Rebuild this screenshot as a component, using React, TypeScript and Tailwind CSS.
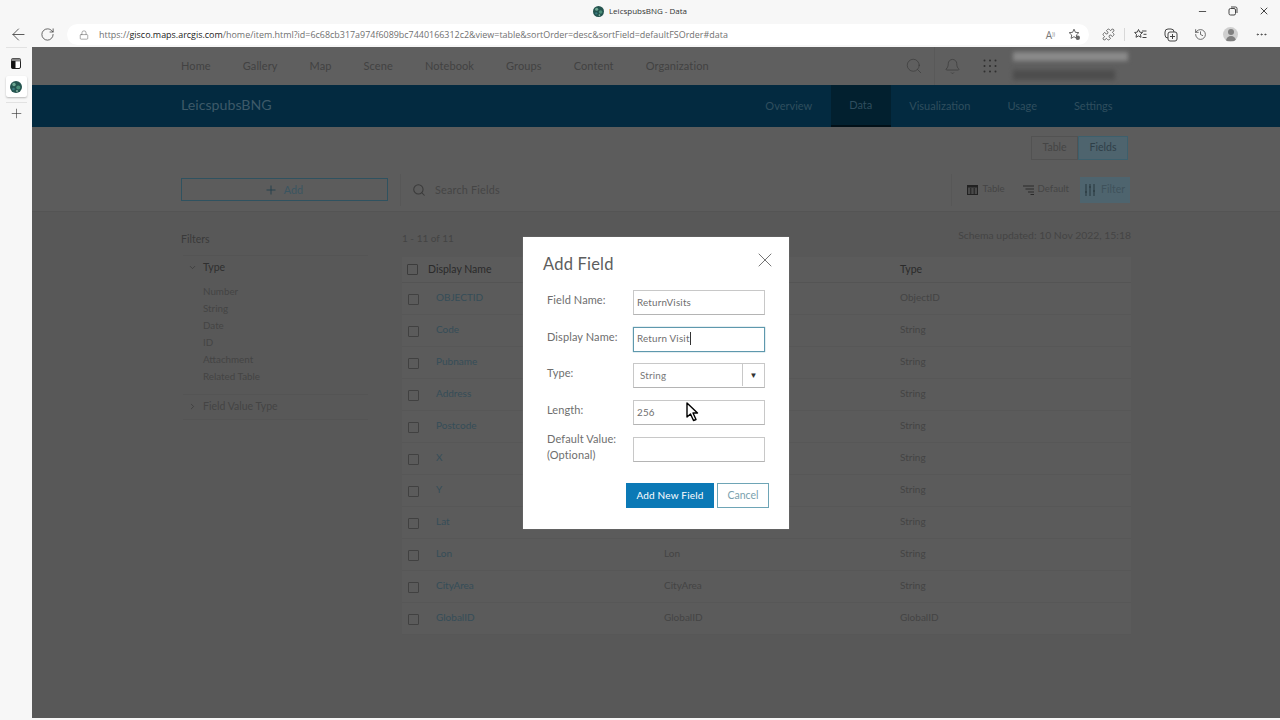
import React from "react";
import { ArrowLeft, RotateCw, Lock, X, Minus, Search, Bell, Plus, ChevronDown, ChevronRight, MoreHorizontal, History, Puzzle } from "lucide-react";

const nav = ["Home", "Gallery", "Map", "Scene", "Notebook", "Groups", "Content", "Organization"];
const tabs = ["Overview", "Data", "Visualization", "Usage", "Settings"];
const rows = [
  ["OBJECTID", "", "ObjectID"],
  ["Code", "", "String"],
  ["Pubname", "", "String"],
  ["Address", "", "String"],
  ["Postcode", "", "String"],
  ["X", "", "String"],
  ["Y", "", "String"],
  ["Lat", "", "String"],
  ["Lon", "Lon", "String"],
  ["CityArea", "CityArea", "String"],
  ["GlobalID", "GlobalID", "GlobalID"],
];

function Globe({ size = 12 }: { size?: number }) {
  return (
    <svg width={size} height={size} viewBox="0 0 12 12">
      <circle cx="6" cy="6" r="6" fill="#24544f" />
      <circle cx="4" cy="3.5" r="1.7" fill="#6fa893" />
      <circle cx="8.3" cy="6.5" r="2" fill="#4c8f79" />
      <circle cx="3.5" cy="8" r="1.3" fill="#3a7a80" />
      <circle cx="7" cy="10" r="0.9" fill="#8fb8a4" />
    </svg>
  );
}

function Field({ label, children, h = "h-[36.5px]" }: { label: React.ReactNode; children: React.ReactNode; h?: string }) {
  return (
    <div className={`flex items-start ${h}`}>
      <div className="w-[86px] pt-[2px] text-[11px] leading-[16px] text-[#6e6e6e] tracking-[0.1px]">{label}</div>
      {children}
    </div>
  );
}

const inputBase = "w-[132px] h-[25px] border border-[#c8c8c8] border-b-[#b4b4b4] text-[9.8px] text-[#6e6e6e] tracking-[0.2px]";

export default function App() {
  return (
    <div className="h-[720px] w-[1280px] overflow-hidden bg-[#f7f7f7] flex flex-col font-['Lato','Noto_Sans',sans-serif]">
      {/* title bar */}
      <div className="h-[22px] flex items-center relative shrink-0">
        <div className="flex-1 flex items-center justify-center gap-[5px] text-[8px] text-[#333] font-['Open_Sans',sans-serif]">
          <Globe size={11} />
          <span>LeicspubsBNG - Data</span>
        </div>
        <div className="absolute right-[10px] top-[5px] flex items-center gap-[20px] text-[#444]">
          <Minus size={11} />
          <svg width="10" height="10" viewBox="0 0 10 10" fill="none" stroke="currentColor" strokeWidth="1">
            <rect x="1" y="2.5" width="6.5" height="6.5" rx="1.5" />
            <path d="M3 1 H7.5 A1.5 1.5 0 0 1 9 2.5 V7" />
          </svg>
          <X size={12} />
        </div>
      </div>
      {/* address bar */}
      <div className="h-[25px] flex items-center shrink-0 text-[#444]">
        <div className="w-[67px] flex items-center pl-[9px] gap-[12px]">
          <ArrowLeft size={19} strokeWidth={1.1} />
          <RotateCw size={15} strokeWidth={1.3} />
        </div>
        <div className="w-[1022px] h-[21px] rounded-full bg-white flex items-center pl-[12px] pr-[8px] text-[8.95px] text-[#707070] font-['Open_Sans',sans-serif]">
          <Lock size={10} className="mr-[10px]" strokeWidth={1.4} />
          <span>https://<span className="text-[#222]">gisco.maps.arcgis.com</span>/home/item.html?id=6c68cb317a974f6089bc7440166312c2&view=table&sortOrder=desc&sortField=defaultFSOrder#data</span>
          <span className="ml-auto text-[10px] text-[#777] mr-[13px] leading-none">A<sup className="text-[5px]">))</sup></span>
          <svg width="13" height="13" viewBox="0 0 13 13" fill="none" stroke="#555" strokeWidth="0.9">
            <path d="M6 1.2 L7.4 4.3 L10.8 4.7 L8.3 7 L8.9 10.4 L6 8.7 L3.1 10.4 L3.7 7 L1.2 4.7 L4.6 4.3 Z" />
            <circle cx="9.8" cy="9.8" r="2.2" fill="#666" stroke="none" />
          </svg>
        </div>
        <div className="flex items-center text-[#444]">
          <Puzzle size={13} strokeWidth={1.4} className="ml-[13px]" />
          <div className="w-px h-[13px] bg-[#d8d8d8] ml-[9px]" />
          <svg width="13" height="13" viewBox="0 0 13 13" fill="none" stroke="currentColor" strokeWidth="1" className="ml-[9px]">
            <path d="M4.5 1.5 L5.7 4.1 L8.6 4.5 L6.5 6.4 L7 9.3 L4.5 7.9 L2 9.3 L2.5 6.4 L0.6 4.5 L3.3 4.1 Z" />
            <path d="M8 3 H12.5 M9.5 6.3 H12.5 M8.5 9.5 H12.5" />
          </svg>
          <svg width="14" height="14" viewBox="0 0 14 14" fill="none" stroke="currentColor" strokeWidth="1" className="ml-[17px]">
            <rect x="1" y="1" width="9" height="9" rx="3" />
            <rect x="4" y="4" width="9" height="9" rx="2" fill="#f7f7f7" />
            <path d="M8.5 6 V11 M6 8.5 H11" />
          </svg>
          <History size={13} strokeWidth={1.4} className="ml-[16px]" />
          <div className="ml-[16px] w-[15px] h-[15px] rounded-full bg-[#cfcfcf] flex flex-col items-center justify-center gap-[1px] overflow-hidden">
            <div className="w-[6px] h-[6px] rounded-full bg-[#808080]" />
            <div className="w-[10px] h-[5px] rounded-t-full bg-[#808080]" />
          </div>
          <MoreHorizontal size={13} strokeWidth={1.6} className="ml-[17px]" />
        </div>
      </div>
      <div className="flex flex-1 min-h-0">
        {/* sidebar */}
        <div className="w-[32px] shrink-0 flex flex-col items-center text-[#333]">
          <div className="w-[21px] h-px bg-[#e2e2e2]" />
          <svg width="10" height="11" viewBox="0 0 10 11" className="mt-[10px]">
            <rect x="0.5" y="0.5" width="9" height="10" rx="1.5" fill="#fff" stroke="#222" />
            <rect x="0.5" y="0.5" width="9" height="3" fill="#888" />
            <rect x="0.5" y="3" width="4" height="7.5" fill="#111" />
          </svg>
          <div className="mt-[7px] w-[21px] h-[21px] rounded-[2px] bg-white shadow-[0_1px_2px_rgba(0,0,0,0.25)] flex items-center justify-center"><Globe size={12} /></div>
          <div className="mt-[5px] w-[21px] h-px bg-[#e2e2e2]" />
          <Plus size={15} strokeWidth={1} className="mt-[3px]" />
        </div>
        {/* main */}
        <div className="flex-1 h-[671px] relative bg-[#585858] text-[#454545] flex flex-col overflow-hidden">
          <div className="h-[38px] shrink-0 bg-[#5f5f5f] flex items-center pl-[149px] pr-[152px] text-[11px] text-[#424242]">
            <div className="flex gap-[32px] tracking-[0.1px]">
              {nav.map((n) => <span key={n}>{n}</span>)}
            </div>
            <div className="ml-auto flex items-center text-[#3a3a3a]">
              <Search size={18} strokeWidth={0.9} />
              <div className="w-px h-[38px] bg-[#595959] ml-[11px]" />
              <Bell size={17} strokeWidth={1} className="ml-[9px]" />
              <svg width="14" height="14" viewBox="0 0 14 14" className="ml-[22px] mr-[16px]" fill="#2f2f2f">
                {[1.5, 7, 12.5].flatMap((y) => [1.5, 7, 12.5].map((x) => <circle key={`${x}-${y}`} cx={x} cy={y} r="1" />))}
              </svg>
              <div className="w-[115px] flex flex-col gap-[9px] -mt-[1px]">
                <div className="h-[9px] w-[115px] bg-[#8a8a8a] blur-[2px]" />
                <div className="h-[10px] w-[102px] bg-[#4d4d4d] blur-[2px]" />
              </div>
            </div>
          </div>
          <div className="h-[42px] shrink-0 bg-[#032a40] flex items-center justify-between pl-[149px] pr-[149px]">
            <span className="text-[14.2px] text-[#3d5968] -mt-[2px]">LeicspubsBNG</span>
            <div className="flex h-full text-[11px] text-[#2f4e5e]">
              {tabs.map((t) => (
                <div key={t} className={t === "Data" ? "px-[18.5px] flex items-center bg-[#02202f] border-b-2 border-[#011018]" : "px-[18.5px] flex items-center"}>{t}</div>
              ))}
            </div>
          </div>
          <div className="h-[41px] shrink-0 flex justify-end items-start pt-[9px] pr-[152px] text-[10.5px] bg-[#5c5c5c]">
            <div className="w-[47px] h-[24px] border border-[#525252] flex items-center justify-center text-[#454545]">Table</div>
            <div className="w-[50px] h-[24px] border border-[#3d5f6c] bg-[#4e646e] flex items-center justify-center text-[#2e3f48]">Fields</div>
          </div>
          <div className="h-[44px] shrink-0 border-b border-[#545454] bg-[#5c5c5c] flex items-center pl-[149px] pr-[150px] text-[10.8px]">
            <div className="w-[207px] h-[23px] pr-[2px] pt-[1px] border border-[#2f5260] flex items-center justify-center gap-[6px] text-[#3a5561]">
              <Plus size={14} strokeWidth={1.6} className="text-[#223f4b]" />Add
            </div>
            <div className="w-px h-[32px] bg-[#575757] ml-[12px]" />
            <Search size={14} strokeWidth={1.8} className="ml-[11px] text-[#3a3a3a]" />
            <span className="ml-[9px] pt-[1px] text-[#454545] tracking-[0.2px]">Search Fields</span>
            <div className="ml-auto flex items-center h-[26px] text-[#454545] text-[9.6px]">
              <div className="w-px h-[32px] bg-[#575757] mr-[15px]" />
              <svg width="11" height="10" viewBox="0 0 11 10" fill="none">
                <rect x="0.5" y="0.5" width="10" height="9" fill="#4a4a4a" stroke="#222" />
                <rect x="0" y="0" width="11" height="2.5" fill="#222" />
                <path d="M3.8 3 V9 M7.2 3 V9" stroke="#222" />
              </svg>
              <span className="ml-[5px] w-[22px]">Table</span>
              <svg width="11" height="10" viewBox="0 0 11 10" stroke="#2a2a2a" className="ml-[18px]">
                <path d="M0 1 H11 M2.5 4 H11 M5 7 H11 M7.5 9.5 H11" />
              </svg>
              <span className="ml-[4px]">Default</span>
              <div className="ml-[11px] w-[50px] h-[26px] bg-[#4e646e] flex items-center justify-center gap-[6px] text-[#3f525b] text-[10.5px]">
                <svg width="10" height="12" viewBox="0 0 10 12" stroke="#26363d">
                  <path d="M1 0 V12 M5 0 V12 M9 0 V12 M0 8 H2 M4 3 H6 M8 7 H10" />
                </svg>
                Filter
              </div>
            </div>
          </div>
          <div className="flex flex-1 pl-[149px] pr-[149px]">
            {/* filters */}
            <div className="w-[207px] shrink-0 pt-[20px] text-[10.5px]">
              <div className="leading-[14px] text-[#3a3a3a]">Filters</div>
              <div className="ml-[2px] w-[185px]">
                <div className="mt-[9px] border-t border-[#545454] pl-[5px] flex items-center text-[#2f2f2f] h-[24px]">
                  <ChevronDown size={9} className="text-[#3a3a3a]" />
                  <span className="ml-[6px]">Type</span>
                </div>
                <div className="pl-[20px] pt-[4px] pb-[8px] border-b border-[#545454] leading-[17.1px] text-[9.8px] text-[#444]">
                  {["Number", "String", "Date", "ID", "Attachment", "Related Table"].map((f) => <div key={f}>{f}</div>)}
                </div>
                <div className="h-[25px] border-b border-[#545454] pl-[5px] flex items-center text-[#444]">
                  <ChevronRight size={9} className="text-[#3a3a3a]" />
                  <span className="ml-[6px]">Field Value Type</span>
                </div>
              </div>
            </div>
            {/* table */}
            <div className="flex-1 ml-[14px] text-[10px]">
              <div className="flex justify-between h-[45px] pt-[19px] text-[#444] leading-[14px]">
                <span>1 - 11 of 11</span>
                <span className="-mt-[3px] text-[10.4px]">Schema updated: 10 Nov 2022, 15:18</span>
              </div>
              <div className="h-[26px] pt-[1px] border-b border-[#545454] bg-[#5b5b5b] flex items-center pl-[5px] text-[10.5px] text-[#2a2a2a]">
                <div className="w-[11px] h-[11px] border border-[#3c3c3c] rounded-[1px] -mt-[2px]" />
                <span className="ml-[10px]">Display Name</span>
                <span className="ml-auto w-[231px]">Type</span>
              </div>
              {rows.map((r) => (
                <div key={r[0]} className="h-[32px] border-b border-[#575757] bg-[#5b5b5b] flex items-center pl-[6px] text-[#354d58]">
                  <div className="w-[11px] h-[11px] border border-[#414141] rounded-[1px] mt-[2px]" />
                  <span className="ml-[17px] w-[228px] -mt-[2px]">{r[0]}</span>
                  <span className="text-[#444] w-[236px] -mt-[2px]">{r[1]}</span>
                  <span className="text-[#444] -mt-[2px]">{r[2]}</span>
                </div>
              ))}
            </div>
          </div>
          {/* modal */}
          <div className="absolute inset-0 pt-[1px] flex items-center justify-center">
            <div className="w-[266px] h-[292px] bg-white relative pl-[24px] pr-[24px] pt-[16px] shadow-[0_0_1px_#888]">
              <div className="-ml-[4px] text-[16.5px] leading-[22px] text-[#5d5d5d] tracking-[0.2px]">Add Field</div>
              <X size={24} strokeWidth={0.7} className="absolute right-[12px] top-[11px] text-[#3a3a3a]" />
              <div className="mt-[15px]">
                <Field label="Field Name:">
                  <div className={`${inputBase} pl-[3px] leading-[22px]`}>ReturnVisits</div>
                </Field>
                <Field label="Display Name:">
                  <div className="w-[132px] h-[25px] pb-[1px] border border-[#5e98ad] pl-[3px] text-[9.8px] text-[#6e6e6e] tracking-[0.2px] shadow-[0_0_1px_#5e98ad] flex items-center">
                    Return Visit<span className="w-px h-[13px] bg-[#333]" />
                  </div>
                </Field>
                <Field label="Type:">
                  <div className={`${inputBase} pl-[6px] pb-[1px] flex items-center text-[#787878]`}>
                    <span className="flex-1">String</span>
                    <div className="w-[22px] h-full border-l border-[#c8c8c8] flex items-center justify-center text-[8px] text-[#333]">▼</div>
                  </div>
                </Field>
                <Field label="Length:">
                  <div className={`${inputBase} pl-[3px] leading-[22px]`}>256</div>
                </Field>
                <div className="flex items-start h-[39px] pt-[1px]">
                  <div className="w-[86px] -mt-[6px] text-[11px] leading-[15.5px] text-[#6e6e6e] tracking-[0.1px]">Default Value:<br />(Optional)</div>
                  <div className={inputBase} />
                </div>
              </div>
              <div className="mt-[8px] flex pl-[79px] gap-[3px]">
                <div className="w-[88px] shrink-0 h-[25px] bg-[#0b79b6] text-white text-[10px] flex items-center justify-center tracking-[0.2px]">Add New Field</div>
                <div className="w-[52px] shrink-0 h-[25px] border border-[#6ea5b6] text-[#7a9fae] text-[10.5px] flex items-center justify-center">Cancel</div>
              </div>
              {/* mouse pointer */}
              <svg width="14" height="20" viewBox="0 0 14 20" className="absolute left-[163px] top-[165px]">
                <path d="M1 1 L1 15 L4.5 12 L7.5 18.5 L10 17.5 L7 11 L11.5 11 Z" fill="#fff" stroke="#000" strokeWidth="1.4" strokeLinejoin="round" />
              </svg>
            </div>
          </div>
        </div>
      </div>
      <div className="h-[2px] bg-[#f7f7f7] shrink-0" />
    </div>
  );
}
